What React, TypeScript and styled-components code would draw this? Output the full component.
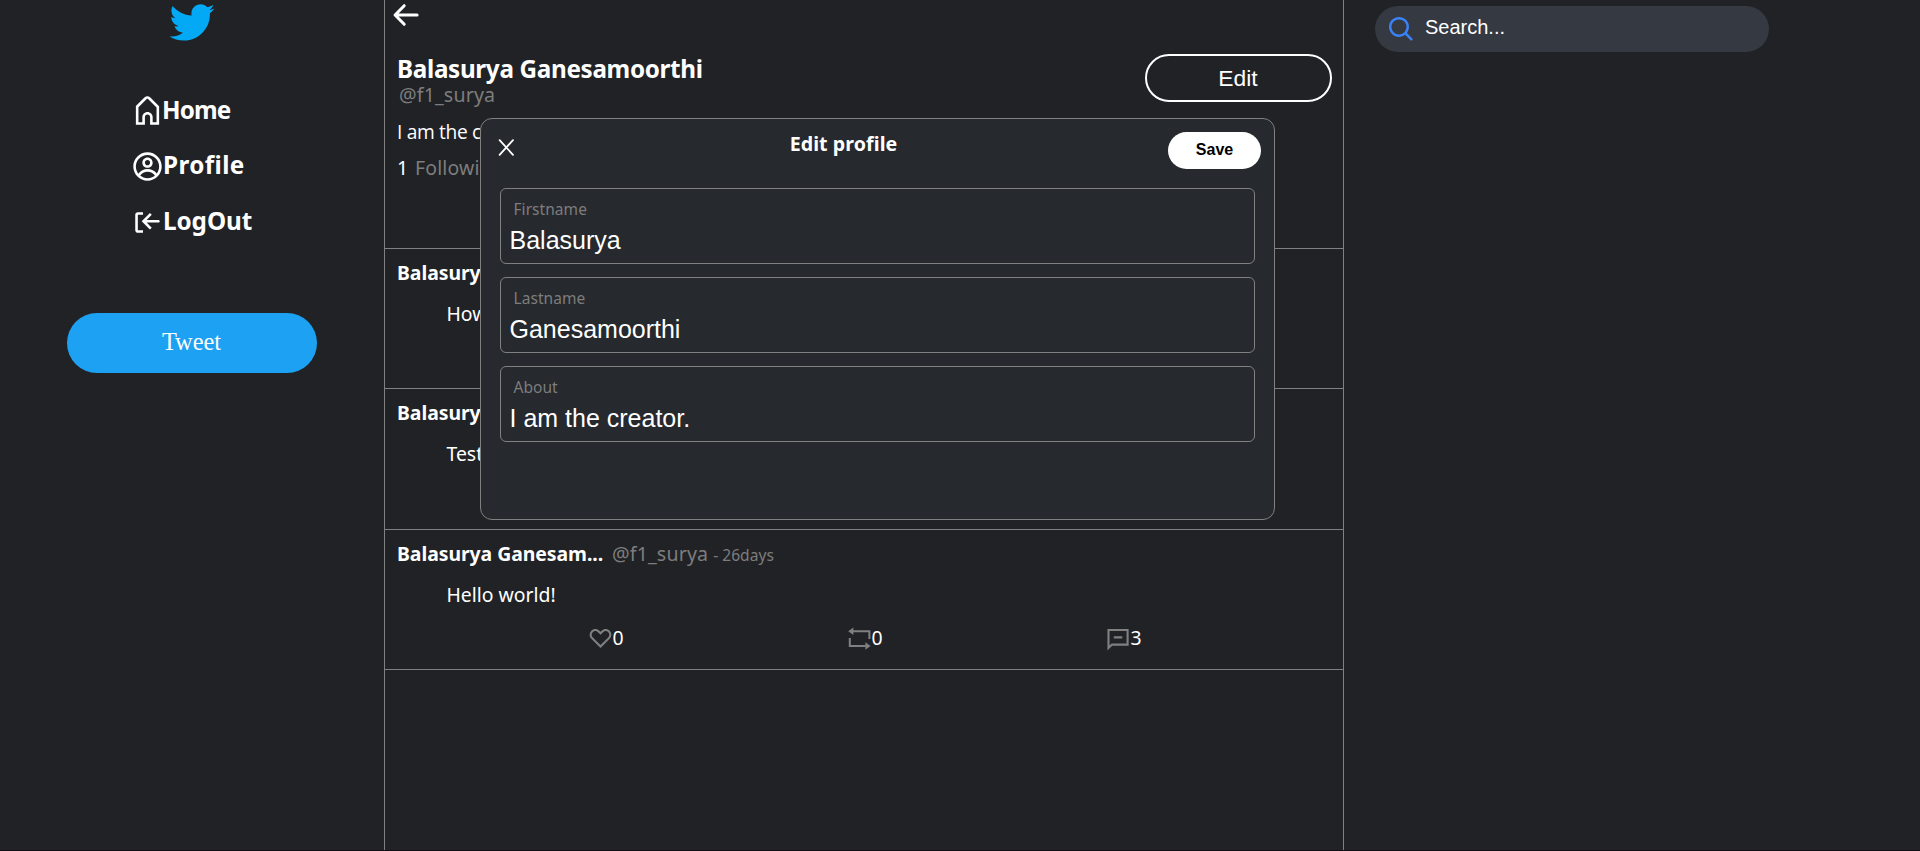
import React from "react";
import styled, { createGlobalStyle } from "styled-components";
import { CgHeart, CgHome, CgLogOut, CgProfile, CgSearch } from "react-icons/cg";

const line = "#808080";
const muted = "#7d7d7d";
const sans = '"Liberation Sans", Arial, sans-serif';

const GlobalStyle = createGlobalStyle`
  * { box-sizing: border-box; }
  body {
    margin: 0;
    background: #101013;
    color: #fff;
    font-family: "Noto Sans", "Open Sans", sans-serif;
    overflow: hidden;
  }
  svg { display: block; flex: none; }
  button { cursor: pointer; margin: 0; }
`;

const Page = styled.div`
  position: relative;
  display: grid;
  grid-template-columns: 384px 960px 1fr;
  height: 850px;
  background: #212226;
`;

const Sidebar = styled.aside`
  display: flex;
  flex-direction: column;
  align-items: center;
`;

const Logo = styled.div`
  height: 83px;
  overflow: hidden;
  svg { margin-top: -7px; }
`;

const Nav = styled.nav`
  align-self: stretch;
  padding-left: 132px;
  margin-bottom: 63px;
`;

const NavItem = styled.a`
  display: flex;
  align-items: center;
  height: 55.7px;
`;

const NavLabel = styled.span<{ $spacing: number; $drop?: number }>`
  font-size: 24.25px;
  font-weight: 700;
  line-height: 30px;
  margin-left: ${(p) => (p.$drop ? -1 : 0)}px;
  padding-bottom: ${(p) => 3 - (p.$drop ?? 0)}px;
  letter-spacing: ${(p) => p.$spacing}px;
`;

const TweetButton = styled.button`
  width: 250px;
  height: 60px;
  border: 0;
  border-radius: 30px;
  padding: 0 1px 3px 0;
  background: #1da1f2;
  color: #fff;
  font: 24.4px "Liberation Serif", "Times New Roman", serif;
`;

const Feed = styled.main`
  border-left: 1px solid ${line};
  border-right: 1px solid ${line};
`;

const ProfileHeader = styled.header`
  height: 249px;
  border-bottom: 1px solid ${line};
  padding: 0 11px 0 12px;
`;

const BackRow = styled.div`
  height: 54px;
  padding-top: 2px;
  margin-left: -7px;
`;

const ProfileTop = styled.div`
  display: flex;
  justify-content: space-between;
  height: 66px;
`;

const FullName = styled.h1`
  margin: 0;
  font-size: 24.25px;
  line-height: 29px;
  font-weight: 700;
  letter-spacing: -0.33px;
`;

const Handle = styled.span<{ $inset?: boolean }>`
  display: block;
  padding-left: ${(p) => (p.$inset ? 2 : 0)}px;
  font-size: 19.6px;
  line-height: 24px;
  letter-spacing: 0.15px;
  color: ${muted};
`;

const EditButton = styled.button`
  width: 187px;
  height: 48px;
  border: 2px solid #fff;
  border-radius: 24px;
  padding: 0 1px 0 0;
  background: transparent;
  color: #fff;
  font: 22.8px ${sans};
`;

const Bio = styled.p`
  margin: 0;
  font-family: "Open Sans", sans-serif;
  font-size: 19.2px;
  line-height: 24px;
  letter-spacing: -0.35px;
`;

const Follow = styled.div`
  display: flex;
  gap: 7px;
  margin-top: 12px;
  font-size: 19.4px;
  line-height: 24px;
`;

const FollowLabel = styled.span`
  letter-spacing: 0.15px;
  color: ${muted};
`;

const Post = styled.article`
  height: 140.4px;
  border-bottom: 1px solid ${line};
  padding: 12px 11px 0 12px;
`;

const PostHead = styled.div`
  display: flex;
  align-items: center;
`;

const Author = styled.strong`
  width: 215px;
  font-size: 19.4px;
  line-height: 24px;
  letter-spacing: -0.05px;
`;

const Time = styled.span`
  padding: 2px 0 0 5px;
  font-size: 15.6px;
  line-height: 22px;
  color: ${muted};
`;

const PostBody = styled.p`
  margin: 17px 0 0 49.5px;
  font-size: 19.4px;
  line-height: 24px;
`;

const Actions = styled.div`
  display: grid;
  grid-template-columns: repeat(3, 259px);
  margin: 19px 0 0 190.5px;
`;

const Action = styled.div`
  display: flex;
  align-items: center;
  height: 25px;
  font-size: 19.4px;
  line-height: 24px;
  svg { color: ${line}; }
`;

const Aside = styled.aside`
  padding: 6px 0 0 31px;
`;

const SearchBox = styled.div`
  display: flex;
  align-items: center;
  width: 394px;
  height: 46px;
  border-radius: 23px;
  padding: 2px 0 0 9px;
  background: #353941;
  font: 20px/24px ${sans};
  svg { color: #3b82f6; }
`;

const SearchText = styled.span`
  margin: 0 0 6px 11px;
`;

const Modal = styled.section`
  position: absolute;
  left: 480px;
  top: 118px;
  width: 795px;
  height: 402px;
  border: 1px solid ${line};
  border-radius: 12px;
  background: #26292d;
`;

const ModalHead = styled.div`
  display: flex;
  justify-content: space-between;
  align-items: flex-start;
  height: 69px;
  padding: 13px 13px 0 13px;
  svg { margin-top: 3px; }
`;

const ModalTitle = styled.h2`
  margin: 0;
  font-size: 19.6px;
  line-height: 24px;
  font-weight: 700;
  letter-spacing: 0.08px;
`;

const SaveButton = styled.button`
  width: 93px;
  height: 37px;
  border: 0;
  border-radius: 18.5px;
  padding: 0 0 2px;
  background: #fff;
  color: #000;
  font: bold 16px ${sans};
`;

const Fields = styled.div`
  display: flex;
  flex-direction: column;
  gap: 13px;
  padding: 0 19px;
`;

const Field = styled.div`
  height: 76px;
  border: 1px solid ${line};
  border-radius: 6px;
  padding: 10px 7px 0 8.5px;
`;

const FieldLabel = styled.div`
  padding-left: 4px;
  font-size: 15.5px;
  line-height: 20px;
  letter-spacing: 0.05px;
  color: ${muted};
`;

const FieldValue = styled.div`
  margin-top: 7px;
  font: 25px/28px ${sans};
`;

const TwitterBird = () => (
  <svg width="60" height="60" viewBox="0 0 48 48" fill="#03a9f4">
    <path d="M42,12.429c-1.323,0.586-2.746,0.977-4.247,1.162c1.526-0.906,2.7-2.351,3.251-4.058c-1.428,0.837-3.01,1.452-4.693,1.776C34.967,9.884,33.05,9,30.926,9c-4.08,0-7.387,3.278-7.387,7.32c0,0.572,0.067,1.129,0.193,1.67c-6.138-0.308-11.582-3.226-15.224-7.654c-0.64,1.082-1,2.349-1,3.686c0,2.541,1.301,4.778,3.285,6.096c-1.211-0.037-2.351-0.374-3.349-0.914c0,0.022,0,0.055,0,0.086c0,3.551,2.547,6.508,5.923,7.181c-0.617,0.169-1.269,0.263-1.941,0.263c-0.477,0-0.942-0.054-1.392-0.135c0.94,2.902,3.667,5.023,6.898,5.086c-2.528,1.96-5.712,3.134-9.174,3.134c-0.598,0-1.183-0.034-1.761-0.104C9.268,36.786,13.152,38,17.321,38c13.585,0,21.017-11.156,21.017-20.834c0-0.317-0.01-0.633-0.025-0.945C39.763,15.197,41.013,13.905,42,12.429" />
  </svg>
);

const BackArrow = () => (
  <svg width="30" height="26" viewBox="0 0 30 26" fill="none" stroke="#fff" strokeWidth="3" strokeLinecap="round" strokeLinejoin="round">
    <path d="M14.2 3.7 5.1 13l9.1 9.3M5.1 13h22" />
  </svg>
);

const CloseIcon = () => (
  <svg width="25" height="25" viewBox="0 0 25 25" fill="none" stroke="#fff" strokeWidth="1.8" strokeLinecap="round">
    <path d="M5.6 5.1 19 19.8M19 5.1 5.6 19.8" />
  </svg>
);

const RetweetIcon = () => (
  <svg width="25" height="25" viewBox="0 0 25 25">
    <path d="M5 5.2h17.4V13M2.8 12v8h16" fill="none" stroke="currentColor" strokeWidth="2" />
    <path d="M1.2 5.2 6.4 1.4V9zM23.6 20l-5.2-3.8v7.6z" fill="currentColor" />
  </svg>
);

const CommentIcon = () => (
  <svg width="25" height="25" viewBox="0 0 25 25" fill="none" stroke="currentColor" strokeWidth="2.1">
    <path d="M2.5 4h19.1v14.6H6L2.5 22zM7.8 11.4h8.5" />
  </svg>
);

const posts = [
  { text: "How are you?", likes: 0, retweets: 0, comments: 0 },
  { text: "Testing", likes: 0, retweets: 0, comments: 0 },
  { text: "Hello world!", likes: 0, retweets: 0, comments: 3 },
];

const fields = [
  ["Firstname", "Balasurya"],
  ["Lastname", "Ganesamoorthi"],
  ["About", "I am the creator."],
];

export default function App() {
  return (
    <>
      <GlobalStyle />
      <Page>
        <Sidebar>
          <Logo><TwitterBird /></Logo>
          <Nav>
            <NavItem><CgHome size={31} /><NavLabel $spacing={-0.9} $drop={2}>Home</NavLabel></NavItem>
            <NavItem><CgProfile size={31} /><NavLabel $spacing={0.4}>Profile</NavLabel></NavItem>
            <NavItem><CgLogOut size={31} /><NavLabel $spacing={-0.05}>LogOut</NavLabel></NavItem>
          </Nav>
          <TweetButton>Tweet</TweetButton>
        </Sidebar>

        <Feed>
          <ProfileHeader>
            <BackRow><BackArrow /></BackRow>
            <ProfileTop>
              <div>
                <FullName>Balasurya Ganesamoorthi</FullName>
                <Handle $inset>@f1_surya</Handle>
              </div>
              <EditButton>Edit</EditButton>
            </ProfileTop>
            <Bio>I am the creator.</Bio>
            <Follow><span>1</span><FollowLabel>Following</FollowLabel></Follow>
          </ProfileHeader>
          {posts.map((post) => (
            <Post key={post.text}>
              <PostHead>
                <Author>Balasurya Ganesam...</Author>
                <Handle>@f1_surya</Handle>
                <Time>- 26days</Time>
              </PostHead>
              <PostBody>{post.text}</PostBody>
              <Actions>
                <Action><CgHeart size={25} />{post.likes}</Action>
                <Action><RetweetIcon />{post.retweets}</Action>
                <Action><CommentIcon />{post.comments}</Action>
              </Actions>
            </Post>
          ))}
        </Feed>

        <Aside>
          <SearchBox>
            <CgSearch size={30} />
            <SearchText>Search...</SearchText>
          </SearchBox>
        </Aside>

        <Modal>
          <ModalHead>
            <CloseIcon />
            <ModalTitle>Edit profile</ModalTitle>
            <SaveButton>Save</SaveButton>
          </ModalHead>
          <Fields>
            {fields.map(([label, value]) => (
              <Field key={label}>
                <FieldLabel>{label}</FieldLabel>
                <FieldValue>{value}</FieldValue>
              </Field>
            ))}
          </Fields>
        </Modal>
      </Page>
    </>
  );
}
